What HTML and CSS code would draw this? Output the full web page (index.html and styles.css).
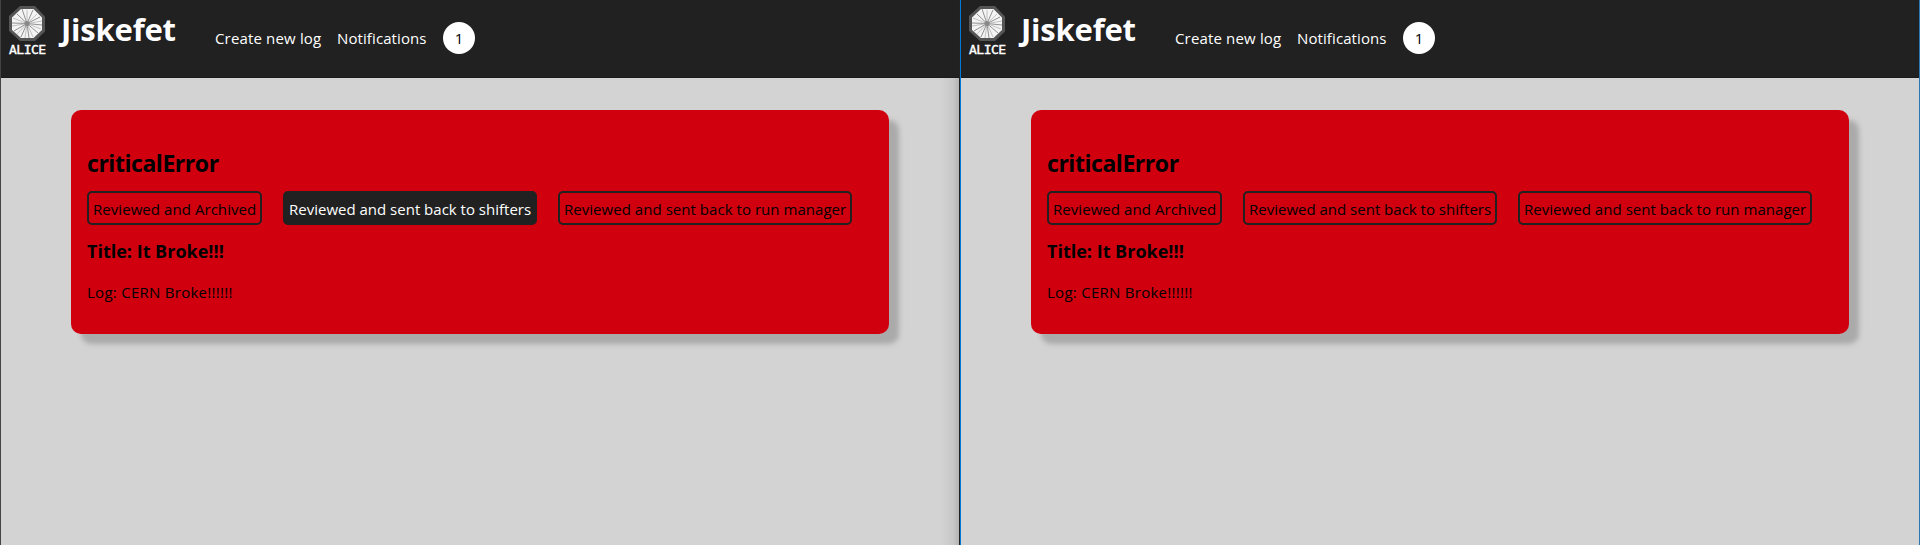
FILE: index.html
```
<!DOCTYPE html>
<html lang="en">
<head>
<meta charset="utf-8">
<title>Jiskefet</title>
<link rel="stylesheet" href="styles.css">
</head>
<body>
<svg class="defs" width="0" height="0" aria-hidden="true">
  <symbol id="detector" viewBox="0 0 36 35">
    <path d="M11 0H26L36 10.500V25.500L26 35H11L0 25V10Z" fill="#555"/>
    <path d="M12 3H24.500L33 11.500V24L24.500 32H12L3 24V11.500Z" fill="#f4f4f4"/>
    <path d="M18 17.500L13 3M18 17.500L24 4M18 17.500L31 11M18 17.500L33 19M18 17.500L29 27M18 17.500L20 32M18 17.500L12 31M18 17.500L5 25M18 17.500L3 17M18 17.500L8 8" stroke="#777" stroke-width=".8"/>
    <path d="M18 17.500L18 4M18 17.500L28 8M18 17.500L33 15M18 17.500L32 23M18 17.500L24 31M18 17.500L16 32M18 17.500L8 28M18 17.500L3 20M18 17.500L4 12" stroke="#aaa" stroke-width=".7"/>
    <circle cx="18" cy="17.500" r="2.500" fill="#888"/>
  </symbol>
</svg>
<main class="windows">
  <section class="window window-left">
    <header class="header">
      <div class="logo">
        <svg class="logo-mark"><use href="#detector"/></svg>
        <span class="logo-text">ALICE</span>
      </div>
      <h1 class="brand">Jiskefet</h1>
      <nav class="nav">
        <a class="link-create">Create new log</a>
        <a class="link-notifications">Notifications</a>
        <span class="count">1</span>
      </nav>
    </header>
    <article class="card">
      <h2 class="severity">criticalError</h2>
      <div class="actions">
        <button class="action archive">Reviewed and Archived</button>
        <button class="action shifters selected">Reviewed and sent back to shifters</button>
        <button class="action manager">Reviewed and sent back to run manager</button>
      </div>
      <h3 class="title">Title: It Broke!!!</h3>
      <p class="log">Log: CERN Broke!!!!!!</p>
    </article>
  </section>
  <section class="window window-right">
    <header class="header">
      <div class="logo">
        <svg class="logo-mark"><use href="#detector"/></svg>
        <span class="logo-text">ALICE</span>
      </div>
      <h1 class="brand">Jiskefet</h1>
      <nav class="nav">
        <a class="link-create">Create new log</a>
        <a class="link-notifications">Notifications</a>
        <span class="count">1</span>
      </nav>
    </header>
    <article class="card">
      <h2 class="severity">criticalError</h2>
      <div class="actions">
        <button class="action archive">Reviewed and Archived</button>
        <button class="action shifters">Reviewed and sent back to shifters</button>
        <button class="action manager">Reviewed and sent back to run manager</button>
      </div>
      <h3 class="title">Title: It Broke!!!</h3>
      <p class="log">Log: CERN Broke!!!!!!</p>
    </article>
  </section>
</main>
</body>
</html>
```
FILE: styles.css
```
* { box-sizing: border-box; }
body {
  margin: 0;
  font: 15px/20px "Open Sans", "Noto Sans", sans-serif;
  color: #000;
  overflow: hidden;
}
h1, h2, h3, p { margin: 0; white-space: nowrap; }
.defs { display: block; }
.windows { display: grid; grid-template-columns: 960px 960px; height: 545px; }
.window { background: #d3d3d3; }
.window-left {
  border-left: 1px solid #444;
  border-right: 1px solid #222;
  background: linear-gradient(to left, #b4b4b4, #c8c8c8 6px, #d3d3d3 18px);
}
.window-right { border-left: 1px solid #0078d7; border-right: 1px solid #2b76b5; }
.header {
  display: flex;
  align-items: flex-start;
  height: 78px;
  padding-left: 8px;
  background: #212121;
  border-bottom: 1px solid #1a1a1a;
}
.logo { display: flex; flex-direction: column; width: 37px; margin-top: 6px; flex: none; }
.logo-mark { width: 36px; height: 35px; }
.logo-text {
  font: 13px/18px "DejaVu Sans Mono", monospace;
  letter-spacing: -0.5px;
  color: #fff;
  -webkit-text-stroke: 0.4px #fff;
}
.brand {
  width: 154px;
  margin: 9px 0 0 15px;
  font-size: 31px;
  line-height: 40px;
  color: #fff;
  letter-spacing: -0.2px;
}
.nav { display: flex; margin-top: 22px; line-height: 32px; color: #fff; white-space: nowrap; }
.link-create { width: 122px; letter-spacing: 0.16px; }
.link-notifications { width: 106px; letter-spacing: 0.1px; }
.count { width: 32px; height: 32px; border-radius: 50%; background: #fff; color: #000; text-align: center; }
.card {
  width: 818px;
  height: 224px;
  margin: 32px 0 0 70px;
  padding: 37px 16px 0;
  border-radius: 10px;
  background: #d0000f;
  box-shadow: 10px 10px 5px #aaa;
}
.severity { font-size: 23px; line-height: 32px; letter-spacing: -0.45px; }
.actions { display: flex; gap: 21px; margin-top: 12px; }
.action {
  height: 34px;
  padding: 6px 0 6px 4px;
  border: 2px solid #212121;
  border-radius: 5px;
  background: transparent;
  font: inherit;
  color: inherit;
  text-align: left;
  white-space: nowrap;
  letter-spacing: 0.04px;
}
.archive { width: 175px; letter-spacing: 0.06px; }
.shifters { width: 254px; letter-spacing: 0; }
.manager { width: 294px; }
.selected { background: #212121; color: #fff; }
.title { margin-top: 14px; font-size: 18px; line-height: 24px; }
.log { margin-top: 19px; letter-spacing: 0.27px; }
```
